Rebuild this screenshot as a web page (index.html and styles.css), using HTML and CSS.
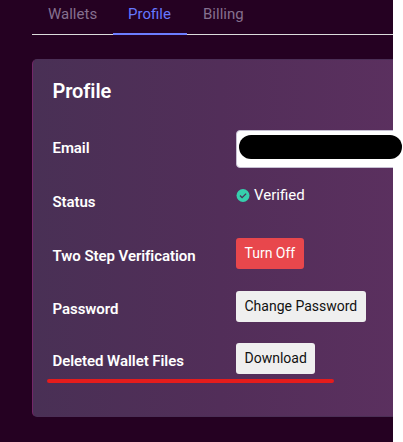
FILE: index.html
```
<!DOCTYPE html>
<html lang="en">
<head>
<meta charset="utf-8">
<title>Profile</title>
<link rel="stylesheet" href="styles.css">
</head>
<body>
<main class="page">
  <nav class="tabs">
    <a class="tab">Wallets</a>
    <a class="tab active">Profile</a>
    <a class="tab">Billing</a>
  </nav>
  <section class="card">
    <h1>Profile</h1>
    <div class="row"><div class="label">Email</div><div class="input"></div></div>
    <div class="row"><div class="label">Status</div>
      <div class="status">
        <svg width="14" height="14" viewBox="0 0 14 14"><circle cx="7" cy="6.5" r="6.5" fill="#36cfad"/><path d="M4 6.5l2.1 2.1 4-4" fill="none" stroke="#4c3058" stroke-width="1.3"/></svg>
        <span>Verified</span>
      </div>
    </div>
    <div class="row"><div class="label">Two Step Verification</div><button class="btn danger">Turn Off</button></div>
    <div class="row short"><div class="label">Password</div><button class="btn">Change Password</button></div>
    <div class="row last"><div class="label">Deleted Wallet Files</div><button class="btn">Download</button></div>
  </section>
</main>
<div class="redaction"></div>
<div class="underline"></div>
</body>
</html>
```
FILE: styles.css
```
* { box-sizing: border-box; }
body {
  margin: 0;
  position: relative;
  height: 442px;
  overflow: hidden;
  background: #fff;
  font: 15px/23px Roboto, sans-serif;
  color: #fff;
}
.page {
  width: 393px;
  height: 442px;
  padding-left: 32px;
  overflow: hidden;
  background: #250122;
}
.tabs {
  display: flex;
  height: 35px;
  border-bottom: 1px solid #dbdbdb;
}
.tab {
  height: 35px;
  min-width: 81px;
  padding: 3px 15px 0 16px;
  color: #85708f;
}
.tab.active {
  min-width: 74px;
  padding: 3px 15px 0;
  color: #6678ff;
  border-bottom: 2px solid #6c7dff;
}
.card {
  width: 420px;
  height: 358px;
  margin-top: 24px;
  padding: 20px 0 0 19.5px;
  border: 1px solid #4b2f56;
  border-left-color: #732768;
  border-radius: 5px;
  background: linear-gradient(90deg, #493055, #522e59 45%, #5b305f 88%);
}
h1 {
  height: 50px;
  margin: 0;
  font-size: 20px;
  line-height: 23px;
  font-weight: 600;
  letter-spacing: -0.1px;
}
.row {
  display: flex;
  align-items: flex-start;
  height: 54px;
}
.row:nth-of-type(3) { height: 53px; }
.row.short { height: 52px; }
.label {
  flex: 0 0 183.5px;
  padding-top: 7px;
  font-weight: 600;
  letter-spacing: -0.06px;
}
.input {
  flex: 0 0 190px;
  height: 38px;
  background: #fff;
  border: 1px solid #c6c0d2;
  border-radius: 4px;
}
.status {
  display: flex;
  align-items: center;
  gap: 4px;
}
.btn {
  height: 31px;
  padding: 0 8.5px;
  border: 0;
  border-radius: 3px;
  background: #efefef;
  color: #111;
  font: 14px/31px Roboto, sans-serif;
}
.btn.danger {
  background: #e8474c;
  color: #fff;
}
.redaction {
  position: absolute;
  left: 239px;
  top: 135px;
  width: 163px;
  height: 24px;
  border-radius: 12px;
  background: #000;
}
.underline {
  position: absolute;
  left: 47px;
  top: 379px;
  width: 287px;
  height: 4px;
  border-radius: 2px;
  background: #e51c1c;
}
```
